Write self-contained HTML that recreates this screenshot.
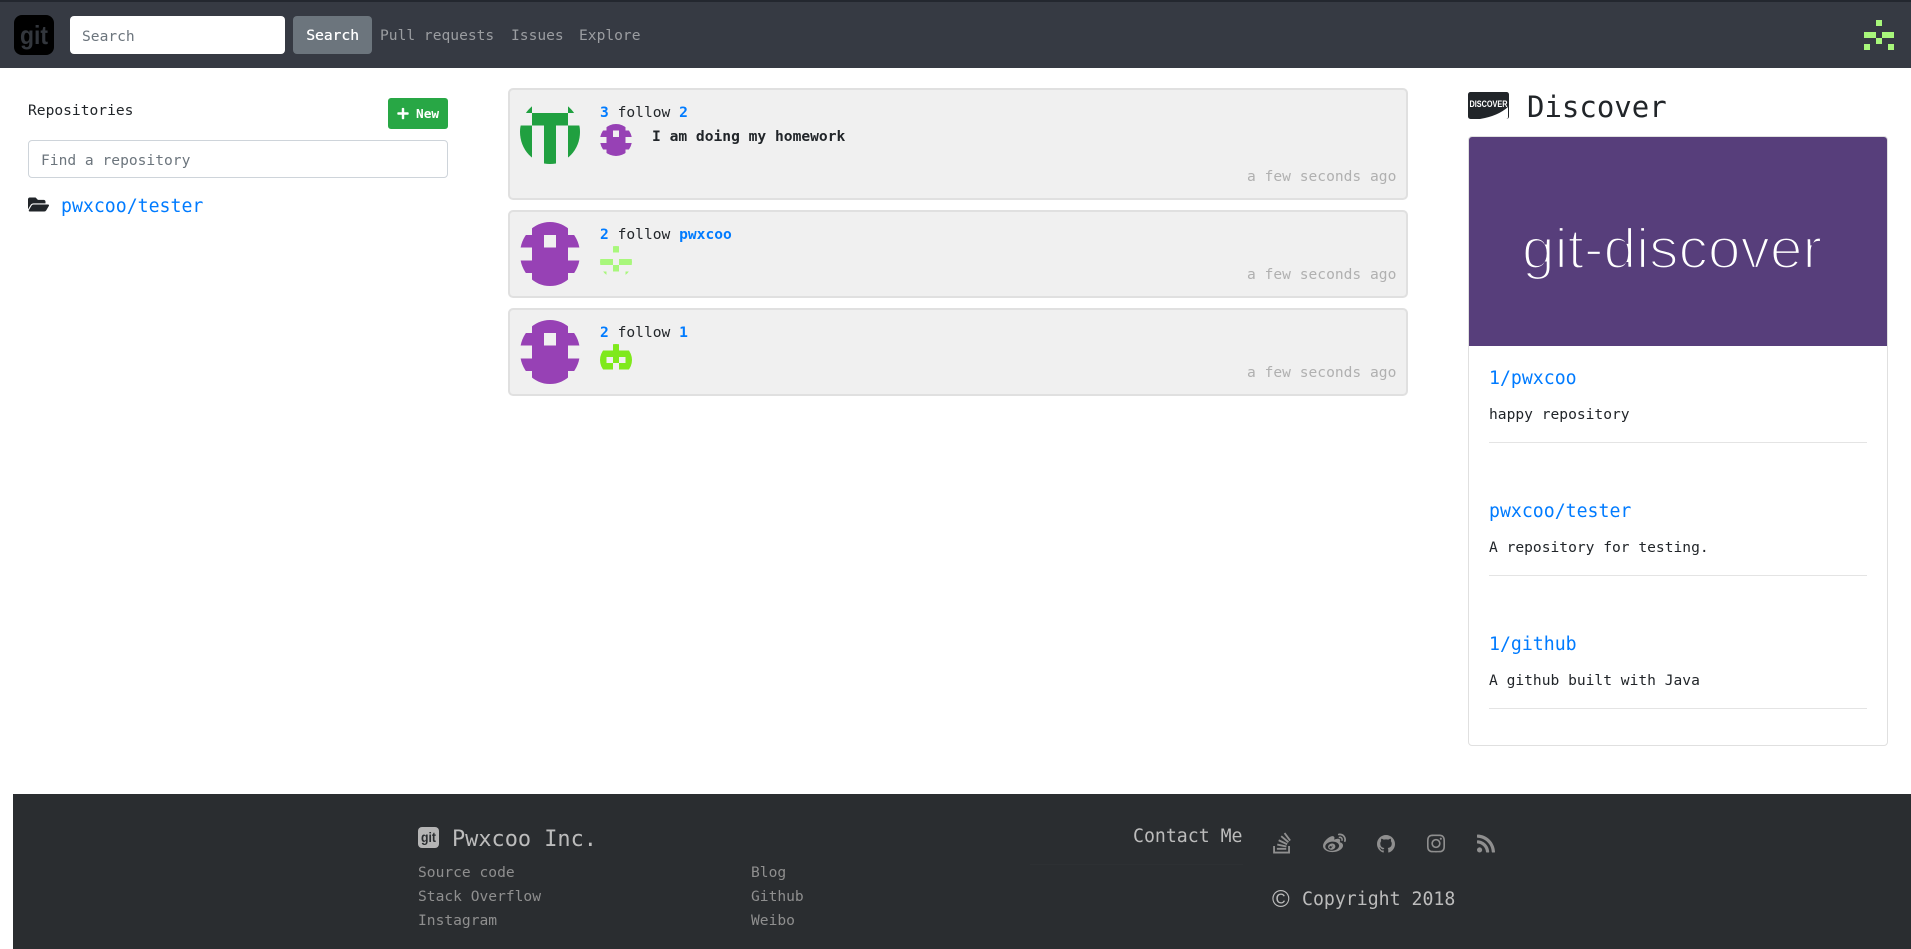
<!DOCTYPE html>
<html lang="en">
<head>
<meta charset="utf-8">
<title>Git</title>
<style>
html,body{margin:0;padding:0;width:1911px;height:949px;overflow:hidden;background:#fff}
body{position:relative;font-family:"DejaVu Sans Mono","Liberation Mono",monospace;font-size:14.6px;color:#212529}
*{box-sizing:border-box}
a{text-decoration:none;color:inherit}
.t{position:absolute;white-space:pre;line-height:20px;font-size:14.6px}
.h{position:absolute;white-space:pre;line-height:24px;font-size:18.2px}
.blue{color:#007bff}
.b{font-weight:bold}
.abs{position:absolute;display:block}
nav{position:absolute;left:0;top:0;width:1911px;height:68px;background:#363a43;border-top:2px solid #23272f}
.nl{color:#9b9da1}
input{position:absolute;font-family:inherit;font-size:14.6px;background:#fff;border-radius:4px;padding:2px 12px 0;outline:none}
input::placeholder{color:#6c757d;opacity:1}
.card{position:absolute;left:508px;width:900px;background:#f0f0f0;border:2px solid #e0e0e0;border-radius:5px}
.time{color:#b0b0b0;left:1247px}
.hr{position:absolute;left:1489px;width:378px;height:1px;background:#e4e4e4}
footer{position:absolute;left:13px;top:794px;width:1898px;height:155px;background:#2a2d30}
.fl{color:#8f8f8f}
.ft{color:#bcbcbc}
svg.ic{position:absolute;fill:#8f8f8f}
</style>
</head>
<body>
<nav></nav>
<svg class="abs" style="left:14px;top:15px" width="40" height="40" viewBox="0 0 40 40"><rect width="40" height="40" rx="8" fill="#000"/><text x="20" y="29" text-anchor="middle" font-family="Liberation Sans" font-weight="bold" font-size="26" fill="#33373d" textLength="28" lengthAdjust="spacingAndGlyphs">git</text></svg>
<input style="left:70px;top:16px;width:215px;height:38px;border:0" placeholder="Search">
<button class="abs" style="left:293px;top:16px;width:79px;height:38px;background:#6c757d;border:0;border-radius:4px;color:#fff;font:14.6px 'DejaVu Sans Mono',monospace;padding:0;text-shadow:.3px 0 0 #fff">Search</button>
<a class="t nl" style="left:380px;top:26px">Pull requests</a>
<a class="t nl" style="left:511px;top:26px">Issues</a>
<a class="t nl" style="left:579px;top:26px">Explore</a>
<svg class="abs" style="left:1864px;top:20px" width="30" height="30" viewBox="0 0 5 5" shape-rendering="crispEdges"><path fill="#a8f77b" d="M2 0h1v1H2zM0 2h2v1H0zM3 2h2v1H3zM2 3h1v1H2zM0 4h1v1H0zM4 4h1v1H4z"/></svg>

<span class="t" style="left:28px;top:101px">Repositories</span>
<a class="abs" style="left:388px;top:98px;width:60px;height:31px;background:#28a745;border-radius:3px"></a>
<svg class="abs" style="left:397px;top:107px" width="12" height="13" viewBox="0 0 448 512"><path fill="#fff" d="M416 208H272V64c0-17.67-14.33-32-32-32h-32c-17.67 0-32 14.33-32 32v144H32c-17.67 0-32 14.33-32 32v32c0 17.67 14.33 32 32 32h144v144c0 17.67 14.33 32 32 32h32c17.67 0 32-14.33 32-32V304h144c17.67 0 32-14.33 32-32v-32c0-17.67-14.33-32-32-32z"/></svg>
<span class="t b" style="left:416px;top:105px;font-size:12.8px;color:#fff">New</span>
<input style="left:28px;top:140px;width:420px;height:38px;border:1px solid #ced4da" placeholder="Find a repository">
<svg class="abs" style="left:28px;top:195px" width="21" height="19" viewBox="0 0 576 512"><path fill="#212529" d="M572.694 292.093L500.27 416.248A63.997 63.997 0 0 1 444.989 448H45.025c-18.523 0-30.064-20.093-20.731-36.093l72.424-124.155A64 64 0 0 1 152 256h399.964c18.523 0 30.064 20.093 20.73 36.093zM152 224h328v-48c0-26.51-21.49-48-48-48H272l-64-64H48C21.49 64 0 85.49 0 112v278.046l69.077-118.418C86.214 242.25 117.989 224 152 224z"/></svg>
<a class="h blue" style="left:61px;top:195px">pwxcoo/tester</a>

<div class="card" style="top:88px;height:112px"></div>
<div class="card" style="top:210px;height:88px"></div>
<div class="card" style="top:308px;height:88px"></div>

<svg class="abs" style="left:520px;top:100px;border-radius:50%" width="60" height="64" viewBox="0 0 5 5" preserveAspectRatio="none" shape-rendering="crispEdges"><path fill="#20a040" d="M0 0h1v1H0zM4 0h1v1H4zM1 1h3v1H1zM0 2h1v3H0zM2 2h1v3H2zM4 2h1v3H4z"/></svg>
<span class="t" style="left:600px;top:103px"><a class="blue b">3</a> follow <a class="blue b">2</a></span>
<svg class="abs" style="left:600px;top:124px;border-radius:50%" width="32" height="32" viewBox="0 0 5 5" shape-rendering="crispEdges"><path fill="#9741b5" d="M1 0h3v1H1zM0 1h2v1H0zM3 1h2v1H3zM1 2h3v1H1zM0 3h5v1H0zM1 4h3v1H1z"/></svg>
<span class="t b" style="left:652px;top:127px">I am doing my homework</span>
<span class="t time" style="top:167px">a few seconds ago</span>

<svg class="abs" style="left:520px;top:222px;border-radius:50%" width="60" height="64" viewBox="0 0 5 5" preserveAspectRatio="none" shape-rendering="crispEdges"><path fill="#9741b5" d="M1 0h3v1H1zM0 1h2v1H0zM3 1h2v1H3zM1 2h3v1H1zM0 3h5v1H0zM1 4h3v1H1z"/></svg>
<span class="t" style="left:600px;top:225px"><a class="blue b">2</a> follow <a class="blue b">pwxcoo</a></span>
<svg class="abs" style="left:600px;top:246px;border-radius:50%" width="32" height="32" viewBox="0 0 5 5" shape-rendering="crispEdges"><path fill="#a8f77b" d="M2 0h1v1H2zM0 2h2v1H0zM3 2h2v1H3zM2 3h1v1H2zM0 4h1v1H0zM4 4h1v1H4z"/></svg>
<span class="t time" style="top:265px">a few seconds ago</span>

<svg class="abs" style="left:520px;top:320px;border-radius:50%" width="60" height="64" viewBox="0 0 5 5" preserveAspectRatio="none" shape-rendering="crispEdges"><path fill="#9741b5" d="M1 0h3v1H1zM0 1h2v1H0zM3 1h2v1H3zM1 2h3v1H1zM0 3h5v1H0zM1 4h3v1H1z"/></svg>
<span class="t" style="left:600px;top:323px"><a class="blue b">2</a> follow <a class="blue b">1</a></span>
<svg class="abs" style="left:600px;top:344px;border-radius:50%" width="32" height="32" viewBox="0 0 5 5" shape-rendering="crispEdges"><path fill="#7fe91c" d="M2 0h1v1H2zM0 1h5v1H0zM0 2h1v1H0zM2 2h1v1H2zM4 2h1v1H4zM0 3h2v1H0zM3 3h2v1H3z"/></svg>
<span class="t time" style="top:363px">a few seconds ago</span>

<svg class="abs" style="left:1468px;top:92px" width="41" height="27" viewBox="0 0 41 27"><rect width="41" height="27" rx="2.5" fill="#212529"/><path fill="#fff" d="M12 27Q30 24 40 15V25a2 2 0 0 1-2 2z"/><text x="1.5" y="14.8" font-family="Liberation Sans" font-weight="bold" font-size="9" fill="#fff" textLength="38" lengthAdjust="spacingAndGlyphs">DISCOVER</text></svg>
<span class="abs" style="left:1527px;top:89px;font-size:29px;line-height:36px;white-space:pre">Discover</span>

<div class="abs" style="left:1468px;top:136px;width:420px;height:610px;border:1px solid #e0e0e0;border-radius:4px;overflow:hidden">
<svg style="display:block" width="418" height="209" viewBox="0 0 418 209"><rect width="418" height="209" fill="#573e7b"/><text x="53" y="131" font-family="Liberation Sans" font-size="57" fill="#fff" stroke="#573e7b" stroke-width="2.3" textLength="300" lengthAdjust="spacingAndGlyphs">git-discover</text></svg>
</div>
<a class="h blue" style="left:1489px;top:367px">1/pwxcoo</a>
<span class="t" style="left:1489px;top:405px">happy repository</span>
<div class="hr" style="top:442px"></div>
<a class="h blue" style="left:1489px;top:500px">pwxcoo/tester</a>
<span class="t" style="left:1489px;top:538px">A repository for testing.</span>
<div class="hr" style="top:575px"></div>
<a class="h blue" style="left:1489px;top:633px">1/github</a>
<span class="t" style="left:1489px;top:671px">A github built with Java</span>
<div class="hr" style="top:708px"></div>

<footer></footer>
<svg class="abs" style="left:418px;top:827px" width="21" height="21" viewBox="0 0 21 21"><rect width="21" height="21" rx="4" fill="#b5b5b5"/><text x="10.5" y="15" text-anchor="middle" font-family="Liberation Sans" font-weight="bold" font-size="14" fill="#2a2d30" textLength="15" lengthAdjust="spacingAndGlyphs">git</text></svg>
<span class="abs ft" style="left:452px;top:826px;font-size:21.9px;line-height:28px;white-space:pre">Pwxcoo Inc.</span>
<a class="t fl" style="left:418px;top:863px">Source code</a>
<a class="t fl" style="left:418px;top:887px">Stack Overflow</a>
<a class="t fl" style="left:418px;top:911px">Instagram</a>
<a class="t fl" style="left:751px;top:863px">Blog</a>
<a class="t fl" style="left:751px;top:887px">Github</a>
<a class="t fl" style="left:751px;top:911px">Weibo</a>
<span class="h ft" style="left:1133px;top:825px">Contact Me</span>
<div class="abs" style="left:1030px;top:864px;width:213px;height:1px;background:#2d3033"></div>
<svg class="ic" style="left:1273px;top:831px" width="18" height="24" viewBox="0 0 384 512"><path d="M290.7 311L95 269.7 86.8 309l195.7 41zm51-87L188.2 95.7l-25.5 30.8 153.5 128.3zm-31.2 39.7L129.2 179l-16.7 36.5L293.7 300zM262 32l-32 24 119.3 160.3 32-24zm20.5 328h-200v39.7h200zm39.7 80H42.7V320h-40v160h359.5V320h-40z"/></svg>
<svg class="ic" style="left:1323px;top:832px" width="23" height="23" viewBox="0 0 512 512"><path d="M407 177.6c7.6-24-13.4-46.8-37.4-41.7-22 4.8-28.8-28.1-7.1-32.8 50.1-10.9 92.3 37.1 76.5 84.8-6.8 21.2-38.8 10.8-32-10.3zM214.8 446.7C108.5 446.7 0 395.3 0 310.4c0-44.3 28-95.4 76.3-143.7C176 67 279.5 65.8 249.9 161c-4 13.1 12.3 5.7 12.3 6 79.5-33.6 140.5-16.8 114 51.4-3.7 9.4 1.1 10.9 8.3 13.1 135.7 42.3 34.8 215.2-169.7 215.2zm143.7-146.3c-5.4-55.7-78.5-94-163.4-85.7-84.8 8.6-148.8 60.3-143.4 116s78.5 94 163.4 85.7c84.8-8.6 148.8-60.3 143.4-116zM347.9 35.1c-25.9 5.6-16.8 43.7 8.3 38.3 72.3-15.2 134.8 52.8 111.7 124-7.4 24.2 29.1 37 37.4 12 31.9-99.8-55.1-195.9-157.4-174.3zm-78.5 311c-17.1 38.8-66.8 60-109.1 46.3-40.8-13.1-58-53.4-40.3-89.7 17.7-35.4 63.1-55.4 103.4-45.1 42 10.8 63.1 50.2 46 88.5zm-86.3-30c-12.9-5.4-30 .3-38 12.9-8.3 12.9-4.3 28 8.6 34 13.1 6 30.8.3 39.1-12.9 8-13.1 3.7-28.3-9.7-34zm32.6-13.4c-5.1-1.7-11.4.6-14.3 5.4-2.9 5.1-1.4 10.6 3.7 12.9 5.1 2 11.7-.3 14.6-5.4 2.8-5.2 1.1-10.9-4-12.9z"/></svg>
<svg class="ic" style="left:1377px;top:835px" width="18" height="18" viewBox="0 0 16 16"><path d="M8 0C3.58 0 0 3.58 0 8c0 3.54 2.29 6.53 5.47 7.59.4.07.55-.17.55-.38 0-.19-.01-.82-.01-1.49-2.01.37-2.53-.49-2.69-.94-.09-.23-.48-.94-.82-1.13-.28-.15-.68-.52-.01-.53.63-.01 1.08.58 1.23.82.72 1.21 1.87.87 2.33.66.07-.52.28-.87.51-1.07-1.78-.2-3.64-.89-3.64-3.95 0-.87.31-1.59.82-2.15-.08-.2-.36-1.02.08-2.12 0 0 .67-.21 2.2.82.64-.18 1.32-.27 2-.27.68 0 1.36.09 2 .27 1.53-1.04 2.2-.82 2.2-.82.44 1.1.16 1.92.08 2.12.51.56.82 1.27.82 2.15 0 3.07-1.87 3.75-3.65 3.95.29.25.54.73.54 1.48 0 1.07-.01 1.93-.01 2.2 0 .21.15.46.55.38A8.013 8.013 0 0016 8c0-4.42-3.58-8-8-8z"/></svg>
<svg class="ic" style="left:1427px;top:832px" width="18" height="23" viewBox="0 0 448 512"><path d="M224.1 141c-63.6 0-114.9 51.3-114.9 114.9s51.3 114.9 114.9 114.9S339 319.5 339 255.9 287.7 141 224.1 141zm0 189.6c-41.1 0-74.7-33.5-74.7-74.7s33.5-74.7 74.7-74.7 74.7 33.5 74.7 74.7-33.6 74.7-74.7 74.7zm146.4-194.3c0 14.9-12 26.8-26.8 26.8-14.9 0-26.8-12-26.8-26.8s12-26.8 26.8-26.8 26.8 12 26.8 26.8zm76.1 27.2c-1.7-35.9-9.9-67.7-36.2-93.9-26.2-26.2-58-34.4-93.9-36.2-37-2.1-147.9-2.1-184.9 0-35.8 1.7-67.6 9.9-93.9 36.1s-34.4 58-36.2 93.9c-2.1 37-2.1 147.9 0 184.9 1.7 35.9 9.9 67.7 36.2 93.9s58 34.4 93.9 36.2c37 2.1 147.9 2.1 184.9 0 35.9-1.7 67.7-9.9 93.9-36.2 26.2-26.2 34.4-58 36.2-93.9 2.1-37 2.1-147.8 0-184.8zM398.8 388c-7.8 19.6-22.9 34.7-42.6 42.6-29.5 11.7-99.5 9-132.1 9s-102.7 2.6-132.1-9c-19.6-7.8-34.7-22.9-42.6-42.6-11.7-29.5-9-99.5-9-132.1s-2.6-102.7 9-132.1c7.8-19.6 22.9-34.7 42.6-42.6 29.5-11.7 99.5-9 132.1-9s102.7-2.6 132.1 9c19.6 7.8 34.7 22.9 42.6 42.6 11.7 29.5 9 99.5 9 132.1s2.7 102.7-9 132.1z"/></svg>
<svg class="ic" style="left:1477px;top:832px" width="18" height="23" viewBox="0 0 448 512"><path d="M128.081 415.959c0 35.369-28.672 64.041-64.041 64.041S0 451.328 0 415.959s28.672-64.041 64.041-64.041 64.04 28.673 64.04 64.041zm175.66 47.25c-8.354-154.6-132.185-278.587-286.95-286.95C7.656 175.765 0 183.105 0 192.253v48.069c0 8.415 6.49 15.472 14.887 16.018 111.832 7.284 201.473 96.702 208.772 208.772.547 8.397 7.604 14.887 16.018 14.887h48.069c9.149.001 16.489-7.655 15.995-16.79zm144.249.288C439.596 229.677 251.465 40.445 16.503 32.01 7.473 31.686 0 38.981 0 48.016v48.068c0 8.625 6.835 15.645 15.453 15.999 191.179 7.839 344.627 161.316 352.465 352.465.353 8.618 7.373 15.453 15.999 15.453h48.068c9.034-.001 16.329-7.474 16.005-16.504z"/></svg>
<span class="abs ft" style="left:1272px;top:886px;font:24px/28px 'Liberation Sans',sans-serif">©</span>
<span class="h ft" style="left:1302px;top:888px">Copyright 2018</span>
</body>
</html>
